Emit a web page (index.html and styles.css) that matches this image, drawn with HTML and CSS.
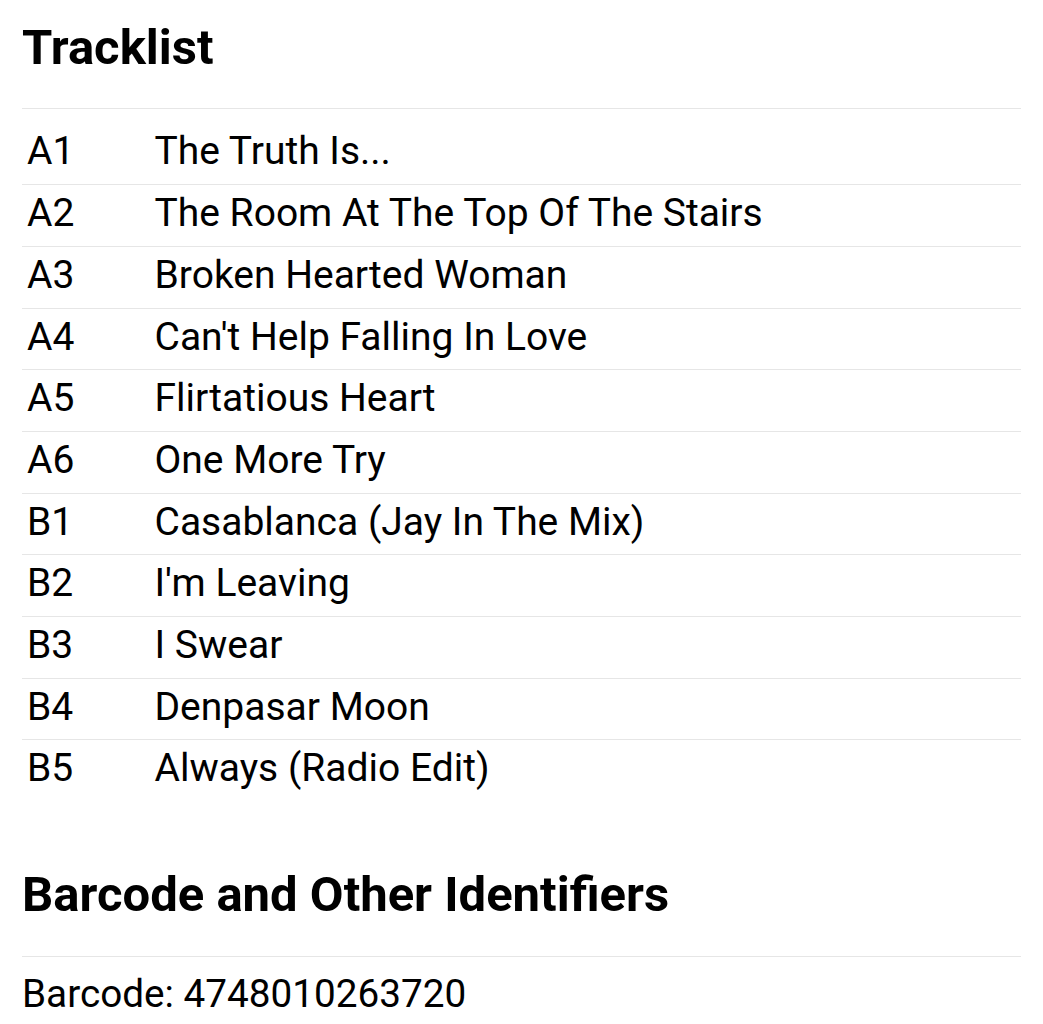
FILE: index.html
```html
<!DOCTYPE html>
<html lang="en">
<head>
<meta charset="utf-8">
<title>Tracklist</title>
<link rel="stylesheet" href="styles.css">
</head>
<body>
<main class="page">
  <section class="section section-tracklist">
    <h2 class="section-title">Tracklist</h2>
    <div class="tracklist">
      <div class="track"><span class="track-pos">A1</span><span class="track-title">The Truth Is...</span></div>
      <div class="track"><span class="track-pos">A2</span><span class="track-title">The Room At The Top Of The Stairs</span></div>
      <div class="track"><span class="track-pos">A3</span><span class="track-title">Broken Hearted Woman</span></div>
      <div class="track"><span class="track-pos">A4</span><span class="track-title">Can't Help Falling In Love</span></div>
      <div class="track"><span class="track-pos">A5</span><span class="track-title">Flirtatious Heart</span></div>
      <div class="track"><span class="track-pos">A6</span><span class="track-title">One More Try</span></div>
      <div class="track"><span class="track-pos">B1</span><span class="track-title">Casablanca (Jay In The Mix)</span></div>
      <div class="track"><span class="track-pos">B2</span><span class="track-title">I'm Leaving</span></div>
      <div class="track"><span class="track-pos">B3</span><span class="track-title">I Swear</span></div>
      <div class="track"><span class="track-pos">B4</span><span class="track-title">Denpasar Moon</span></div>
      <div class="track"><span class="track-pos">B5</span><span class="track-title">Always (Radio Edit)</span></div>
    </div>
  </section>
  <section class="section section-identifiers">
    <h2 class="section-title">Barcode and Other Identifiers</h2>
    <ul class="identifiers">
      <li class="identifier">Barcode: 4748010263720</li>
    </ul>
  </section>
</main>
</body>
</html>
```
FILE: styles.css
```css
html, body {
  margin: 0;
  padding: 0;
  background: #ffffff;
}

body {
  font-family: Roboto, "Liberation Sans", Arial, sans-serif;
  color: #000000;
}

.page {
  padding: 18.5px 22px 0 22px;
}

.section-title {
  margin: 0;
  font-size: 49px;
  font-weight: 700;
  line-height: 57.4px;
  padding-bottom: 32.5px;
  border-bottom: 1px solid #e6e6e6;
}

.tracklist {
  margin-top: 14px;
  display: flex;
  flex-direction: column;
}

.track {
  display: flex;
  font-size: 39px;
  line-height: 45.7px;
  padding: 6px 0 9px 0;
  border-bottom: 1px solid #e6e6e6;
}

.track:last-child {
  border-bottom: none;
}

.track-pos {
  flex: 0 0 127.5px;
  padding-left: 5px;
}

.track-title {
  flex: 1 1 auto;
}

.section-identifiers {
  margin-top: 65px;
}

.identifiers {
  list-style: none;
  margin: 14px 0 0 0;
  padding: 0;
}

.identifier {
  font-size: 38.7px;
  line-height: 45.7px;
  padding: 0;
}
```
